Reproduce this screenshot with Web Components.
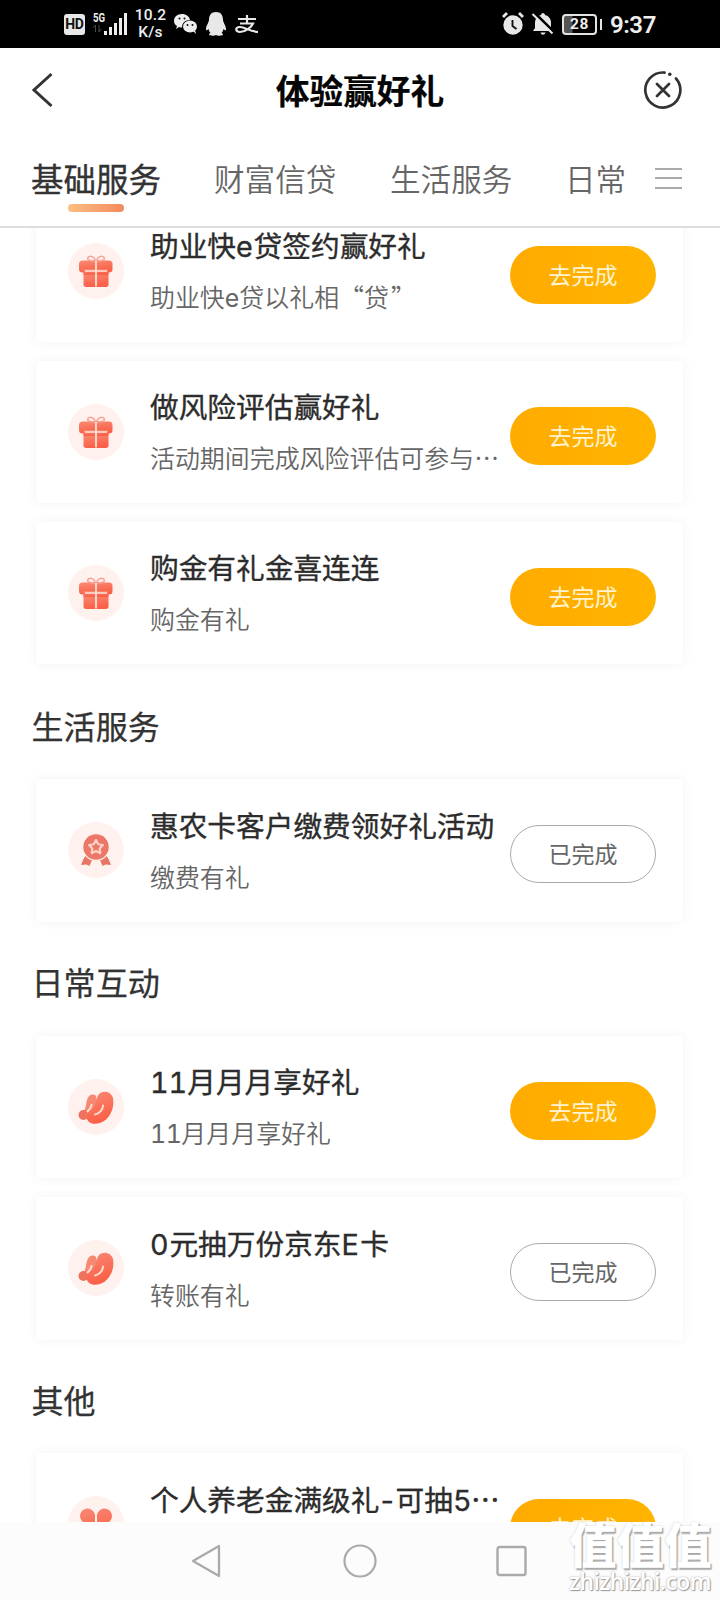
<!DOCTYPE html>
<html lang="zh-CN">
<head>
<meta charset="utf-8">
<title>体验赢好礼</title>
<style>
html,body{margin:0;padding:0;background:#fff}
body{width:720px;height:1600px;overflow:hidden;font-family:"Noto Sans CJK SC",sans-serif}
</style>
</head>
<body>
<reward-app></reward-app>
<script>
const define = (name, html, setup) => {
  const t = document.createElement('template');
  t.innerHTML = html;
  customElements.define(name, class extends HTMLElement {
    constructor() {
      super();
      this.attachShadow({mode: 'open'}).append(t.content.cloneNode(true));
    }
    connectedCallback() { if (setup) setup(this, this.shadowRoot); }
  });
};

define('status-bar', `
<style>
:host{display:flex;height:48px;background:#000;color:#eee;align-items:center;padding:0 64px 0 64px;box-sizing:border-box;font-family:Roboto,sans-serif}
svg{display:block;flex:none}
.rate{font-size:15.500px;line-height:17.5px;font-weight:500;text-align:center;width:32px;margin:0 7px 0 8px;letter-spacing:.2px}
.net{display:flex;flex-direction:column;width:12px;margin-left:8px;font:500 12px/12px Roboto;align-self:flex-start;padding-top:12px}
.net b{font-weight:700;transform:scaleX(.8);transform-origin:0 0}
.hd{width:20.500px;height:21px;border-radius:3px;background:#e8e8e8;color:#111;font:700 14px/21px Roboto;text-align:center;margin-top:1px;letter-spacing:-.5px}
.sp{flex:1}
.bat{width:31px;height:17px;border:2px solid #e4e4e4;border-radius:4px;font:700 15.500px/17.5px Roboto;text-align:center;background:linear-gradient(90deg,#555 8px,#000 9px);letter-spacing:.6px}
.nub{width:2px;height:11px;background:#e4e4e4;margin:0 8px 0 3px}
.time{font-size:24px;font-weight:600;line-height:48px;letter-spacing:-.4px;padding-top:2px}
</style>
<div class="hd">HD</div>
<div class="net"><b>5G</b><svg width="9" height="9" viewBox="0 0 9 9" stroke="#484848" fill="none"><path d="M2.5 8V1L0 4M6 1v7l2.5-3"/></svg></div>
<svg width="23" height="24" viewBox="0 0 23 24" fill="#eee" style="margin-left:-1px"><path d="M0 19h3v4H0zM5 15h3v8H5zM10 11h3v12h-3zM15 6h3v17h-3zM20 1h3v22h-3z"/></svg>
<div class="rate">10.2<br>K/s</div>
<svg width="23" height="20" viewBox="0 0 23 20"><path fill="#eee" d="M8 0C3 0 0 3 0 7c0 2 1 4 3 5l-1 3 3-2c1 .4 2 .5 3 .5C8 9 11 6 16 6 15.500 2.500 12 0 8 0z"/><ellipse cx="16" cy="12.500" rx="7" ry="6" fill="#eee"/><path d="M19 17l3 3-1-4z" fill="#eee"/><g fill="#111"><circle cx="5.500" cy="4.500" r="1"/><circle cx="10.500" cy="4.500" r="1"/><circle cx="13.500" cy="11" r="1"/><circle cx="18.500" cy="11" r="1"/></g></svg>
<svg width="22" height="24" viewBox="0 0 22 24" fill="#e8e8e8" style="margin-left:8px"><path d="M11 0c5 0 7 3.500 7 8 0 2 3 6 3 9 0 2-1 1.500-2.500 0-.5 2-1 3-2 4 1 .5 1.500 1 1.500 1.500 0 1.500-6 1.500-7 .5-1 1-7 1-7-.5 0-.5.500-1 1.500-1.500-1-1-1.500-2-2-4C2 18.500 1 19 1 17c0-3 3-7 3-9 0-4.500 2-8 7-8z"/></svg>
<svg width="24" height="19" viewBox="0 0 24 19" style="margin-left:8px" fill="none" stroke="#e8e8e8"><path stroke-width="2.200" d="M3 4h18M12 0v8M5 8.500h13C16 13 10 17 5 17c-5 0-5-5 0-5 5 0 9 4 18 5"/></svg>
<span class="sp"></span>
<svg width="24" height="24" viewBox="0 0 24 24" fill="none"><circle cx="12" cy="13" r="9.700" fill="#e8e8e8"/><path d="M2 5l4-4M22 5l-4-4" stroke="#e8e8e8" stroke-width="2.800"/><path d="M11.500 8v6l4 3" stroke="#111" stroke-width="1.900"/></svg>
<svg width="24" height="24" viewBox="0 0 24 24" style="margin:0 7px 0 6px"><path fill="#e8e8e8" d="M12 1c1 0 2 1 2 2 4 1 6 4 6 8v5l2 3H2l2-3v-5c0-4 2-7 6-8 0-1 1-2 2-2zM9.500 20.500h5c-1 3-4 3-5 0z"/><path d="M3 .5L23 20" stroke="#000" stroke-width="3"/><path d="M1.500 2L21.500 21.500" stroke="#e8e8e8" stroke-width="2"/></svg>
<div class="bat">28</div><div class="nub"></div><div class="time">9:37</div>`);

define('page-header', `
<style>
:host{display:flex;align-items:center;justify-content:space-between;height:84px;padding:0 37px 0 31px;box-sizing:border-box}
h1{margin:0 0 0 8px;font-size:33.700px;line-height:50px;font-weight:700;color:#050505;-webkit-text-stroke:.2px #000}
svg{display:block}.b{width:38px}
</style>
<svg class="b" width="38" height="36" viewBox="0 0 38 36" fill="none" stroke="#333" stroke-width="3"><path d="M20.500 2L3 18l17.500 16"/></svg>
<h1><slot></slot></h1>
<svg width="40" height="40" viewBox="0 0 40 40" fill="none" stroke="#333" stroke-width="2.700"><path d="M21.500 2.600A17.500 17.500 0 1 0 33 8.500M14 14l12 12M26 14l-12 12" stroke-linecap="round"/><circle cx="26.800" cy="4.200" r="1.800" fill="#333" stroke="none"/></svg>`);

define('tab-strip', `
<style>
:host{display:flex;height:96px;box-sizing:border-box;border-bottom:2px solid #ddd;padding-left:31px;background:#fff}
.t{font-size:30.600px;line-height:46px;color:#666;font-weight:350;width:176px;padding-top:22.500px;white-space:nowrap;flex:none}
.t.on{font-size:32.500px;font-weight:400;color:#333;width:183px;-webkit-text-stroke:.35px #333}
.on i{display:block;width:56px;height:8px;border-radius:4px;background:linear-gradient(90deg,#fdbe80,#f28a5e);margin:3.500px 0 0 37px}
.t.last{width:88.500px;text-indent:-1px}
.m{width:27px;height:17px;border-top:2px solid #aaa;border-bottom:2px solid #aaa;margin-top:35.500px;background:linear-gradient(#aaa,#aaa) 0 50%/100% 2px no-repeat}
</style>
<div class="t on">基础服务<i></i></div><div class="t">财富信贷</div><div class="t">生活服务</div><div class="t last">日常</div><div class="m"></div>`);

const icons = {
gift: `<path fill="url(#g)" d="M15.500 30h25v11.500c0 1.500-1 2.500-2.500 2.500H18c-1.500 0-2.500-1-2.500-2.500z"/><rect x="11" y="17.500" width="33.500" height="12" rx="3.500" fill="url(#g)"/><path fill="url(#g)" d="M15.500 26h25v6h-25z"/><g fill="none" stroke="#f9a090" stroke-width="1.500"><path d="M27.500 18c-6 0-9-1-7.500-3.500 2-2.500 6.500-1 7.500 3.500zM28.500 18c6 0 9-1 7.500-3.500-2-2.500-6.500-1-7.500 3.500z"/></g><path d="M28 18V43.500M17 28h22" stroke="#ffe6dc" stroke-width="1.700"/>`,
medal: `<path fill="#e87565" d="M17.500 33.500l7 3.500-3 7-3-1.500-5.500.5 2-5zM38.500 33.500l-7 3.500 3 7 3-1.500 5.500.5-2-5z"/><circle cx="28" cy="25" r="14" fill="#ffeee9"/><circle cx="28" cy="25" r="12.700" fill="#ea7768"/><path fill="none" stroke="#ffd2c6" stroke-width="2.100" stroke-linejoin="round" d="M28 18l2.200 4.200 4.800.8-3.400 3.400.7 4.800-4.300-2.200-4.300 2.200.7-4.800L21 23l4.800-.8z"/>`,
bean: `<path fill="#f58973" d="M19 21c1-5 6-7 9-4l2 10-10 14c-5-3-5-7-3-11 1-3 1-6 2-9z"/><circle cx="15.500" cy="36" r="5" fill="#ef725f"/><path fill="url(#g)" d="M31 15c4-4 12-3 14 4 2 11-4 22-13 25-8 2.500-14-1-13-7 0-3 2-5 5-7 5-4 3-10 7-15z"/><path d="M35 26.500c0 4-3.500 8-8 9M23.500 26c-.5 3-2 5-4 6.500" fill="none" stroke="#ffdccf" stroke-width="2" stroke-linecap="round"/>`,
clover: `<path fill="url(#g)" d="M27 27H17a7.500 7.500 0 1 1 10-8zM29 27h10a7.500 7.500 0 1 0-10-8zM27 29v10a7.500 7.500 0 1 1-10-10zM29 29v10a7.500 7.500 0 1 0 10-10z"/>`};

define('task-icon', `
<style>:host{display:block;width:56px;height:56px}svg{display:block}</style>
<svg width="56" height="56" viewBox="0 0 56 56"><defs><linearGradient id="g" x1="0" y1="0" x2="0.300" y2="1"><stop offset="0" stop-color="#f98a74"/><stop offset="1" stop-color="#fa5f47"/></linearGradient></defs><circle cx="28" cy="28" r="28" fill="#fff2ee"/><g></g></svg>`,
(el, r) => { r.querySelector('g').innerHTML = icons[el.getAttribute('kind')]; });

define('task-button', `
<style>
:host{display:flex;align-items:center;justify-content:center;width:146px;height:58px;border-radius:29px;box-sizing:border-box;background:linear-gradient(90deg,#ffab00,#ffb400);color:#fff3cf;font-size:23px;line-height:34px;padding-bottom:2px}
:host([done]){background:#fff;border:1.500px solid #aaa;color:#666}
</style><slot></slot>`);

define('task-card', `
<style>
:host{display:flex;height:142.500px;box-sizing:border-box;padding:0 27px 0 31.500px;margin:0 37px 18.500px 36px;background:#fff;box-shadow:0 0 12px rgba(0,0,0,.055);border-radius:3px}
task-icon{margin-top:43px;flex:none}
.x{flex:1;min-width:0;margin-left:26.500px;padding-top:24.500px;white-space:nowrap}
.a{font-size:28.700px;line-height:42px;color:#2c2c2c;-webkit-text-stroke:.35px #2c2c2c}
.s{font-size:24.950px;line-height:36px;color:#666;font-weight:350;margin-top:12px}
task-button{margin-top:46px;flex:none}
</style>
<task-icon></task-icon><div class="x"><div class="a"><slot name="title"></slot></div><div class="s"><slot></slot></div></div><task-button></task-button>`,
(el, r) => {
  const i = r.querySelector('task-icon'), b = r.querySelector('task-button');
  const n = document.createElement('task-icon');
  n.setAttribute('kind', el.getAttribute('icon'));
  i.replaceWith(n);
  b.textContent = el.hasAttribute('done') ? '已完成' : '去完成';
  b.toggleAttribute('done', el.hasAttribute('done'));
});

define('section-title', `
<style>:host{display:block;height:96.500px;box-sizing:border-box;padding:18.500px 0 0 31.500px;font-size:32.100px;line-height:46px;color:#333;-webkit-text-stroke:.25px #333}</style><slot></slot>`);

define('nav-bar', `
<style>:host{display:flex;height:78px;background:#fcfcfc;padding-left:190px;box-sizing:border-box;align-items:center;gap:120px}svg{display:block}</style>
<svg width="34" height="36" viewBox="0 0 34 36" fill="none" stroke="#aaa" stroke-width="2.300" stroke-linejoin="round"><path d="M29 3v30L3 18z"/></svg>
<svg width="34" height="36" viewBox="0 0 34 36" fill="none" stroke="#aaa" stroke-width="2.200" style="margin-left:-1px"><circle cx="17" cy="18" r="15.500"/></svg>
<svg width="34" height="36" viewBox="0 0 34 36" fill="none" stroke="#aaa" stroke-width="2.400" style="margin-left:-1px"><rect x="1.500" y="4" width="28" height="28" rx="2"/></svg>`);

define('water-mark', `
<style>
:host{position:absolute;right:7px;bottom:4px;width:144px;color:#fff;white-space:nowrap;text-shadow:1.500px 1.500px 1px #aaa,0 0 2px #ccc}
.a{font:900 47.500px/50px "Noto Sans CJK SC",sans-serif}
.b{font:600 22.800px/28px "Open Sans",sans-serif;text-shadow:1px 1px 1px #999,0 0 2px #aaa;letter-spacing:-.5px}
</style><div class="a">值值值</div><div class="b">zhizhizhi.com</div>`);

define('reward-app', `
<style>
:host{display:flex;flex-direction:column;width:720px;height:1600px;position:relative;background:#fff}
main{flex:1;min-height:0;overflow:hidden}
.in{margin-top:-28.500px}
.n{font-family:Inter,sans-serif;font-weight:400;line-height:1;font-variant-numeric:tabular-nums}
.e{letter-spacing:.8px}
.w{letter-spacing:1.500px}
.h{letter-spacing:-1px;margin-left:-1.500px}
.q{letter-spacing:2px}
status-bar,page-header,tab-strip,nav-bar{flex:none}
</style>
<status-bar></status-bar>
<page-header>体验赢好礼</page-header>
<tab-strip></tab-strip>
<main><div class="in">
<task-card icon="gift"><span slot="title">助业快<span class="n e">e</span>贷签约赢好礼</span>助业快<span class="n">e</span>贷以礼相“<span class="q">贷</span>”</task-card>
<task-card icon="gift"><span slot="title">做风险评估赢好礼</span>活动期间完成风险评估可参与…</task-card>
<task-card icon="gift"><span slot="title">购金有礼金喜连连</span>购金有礼</task-card>
<section-title style="padding-top:19.5px">生活服务</section-title>
<task-card icon="medal" done><span slot="title">惠农卡客户缴费领好礼活动</span>缴费有礼</task-card>
<section-title style="height:95.5px;padding-top:18px">日常互动</section-title>
<task-card icon="bean"><span slot="title"><span class="n">11</span>月月月享好礼</span><span class="n" style="letter-spacing:-.5px">11</span>月月月享好礼</task-card>
<task-card icon="bean" done style="margin-top:19px"><span slot="title"><span class="n e">0</span>元抽万份京东<span class="n w">E</span>卡</span>转账有礼</task-card>
<section-title style="height:95px;padding-top:18px">其他</section-title>
<task-card icon="clover"><span slot="title">个人养老金满级礼<span class="n h">-</span>可抽<span class="n" style="letter-spacing:-.5px">5</span>…</span></task-card>
</div></main>
<nav-bar></nav-bar>
<water-mark></water-mark>`);
</script>
</body>
</html>
